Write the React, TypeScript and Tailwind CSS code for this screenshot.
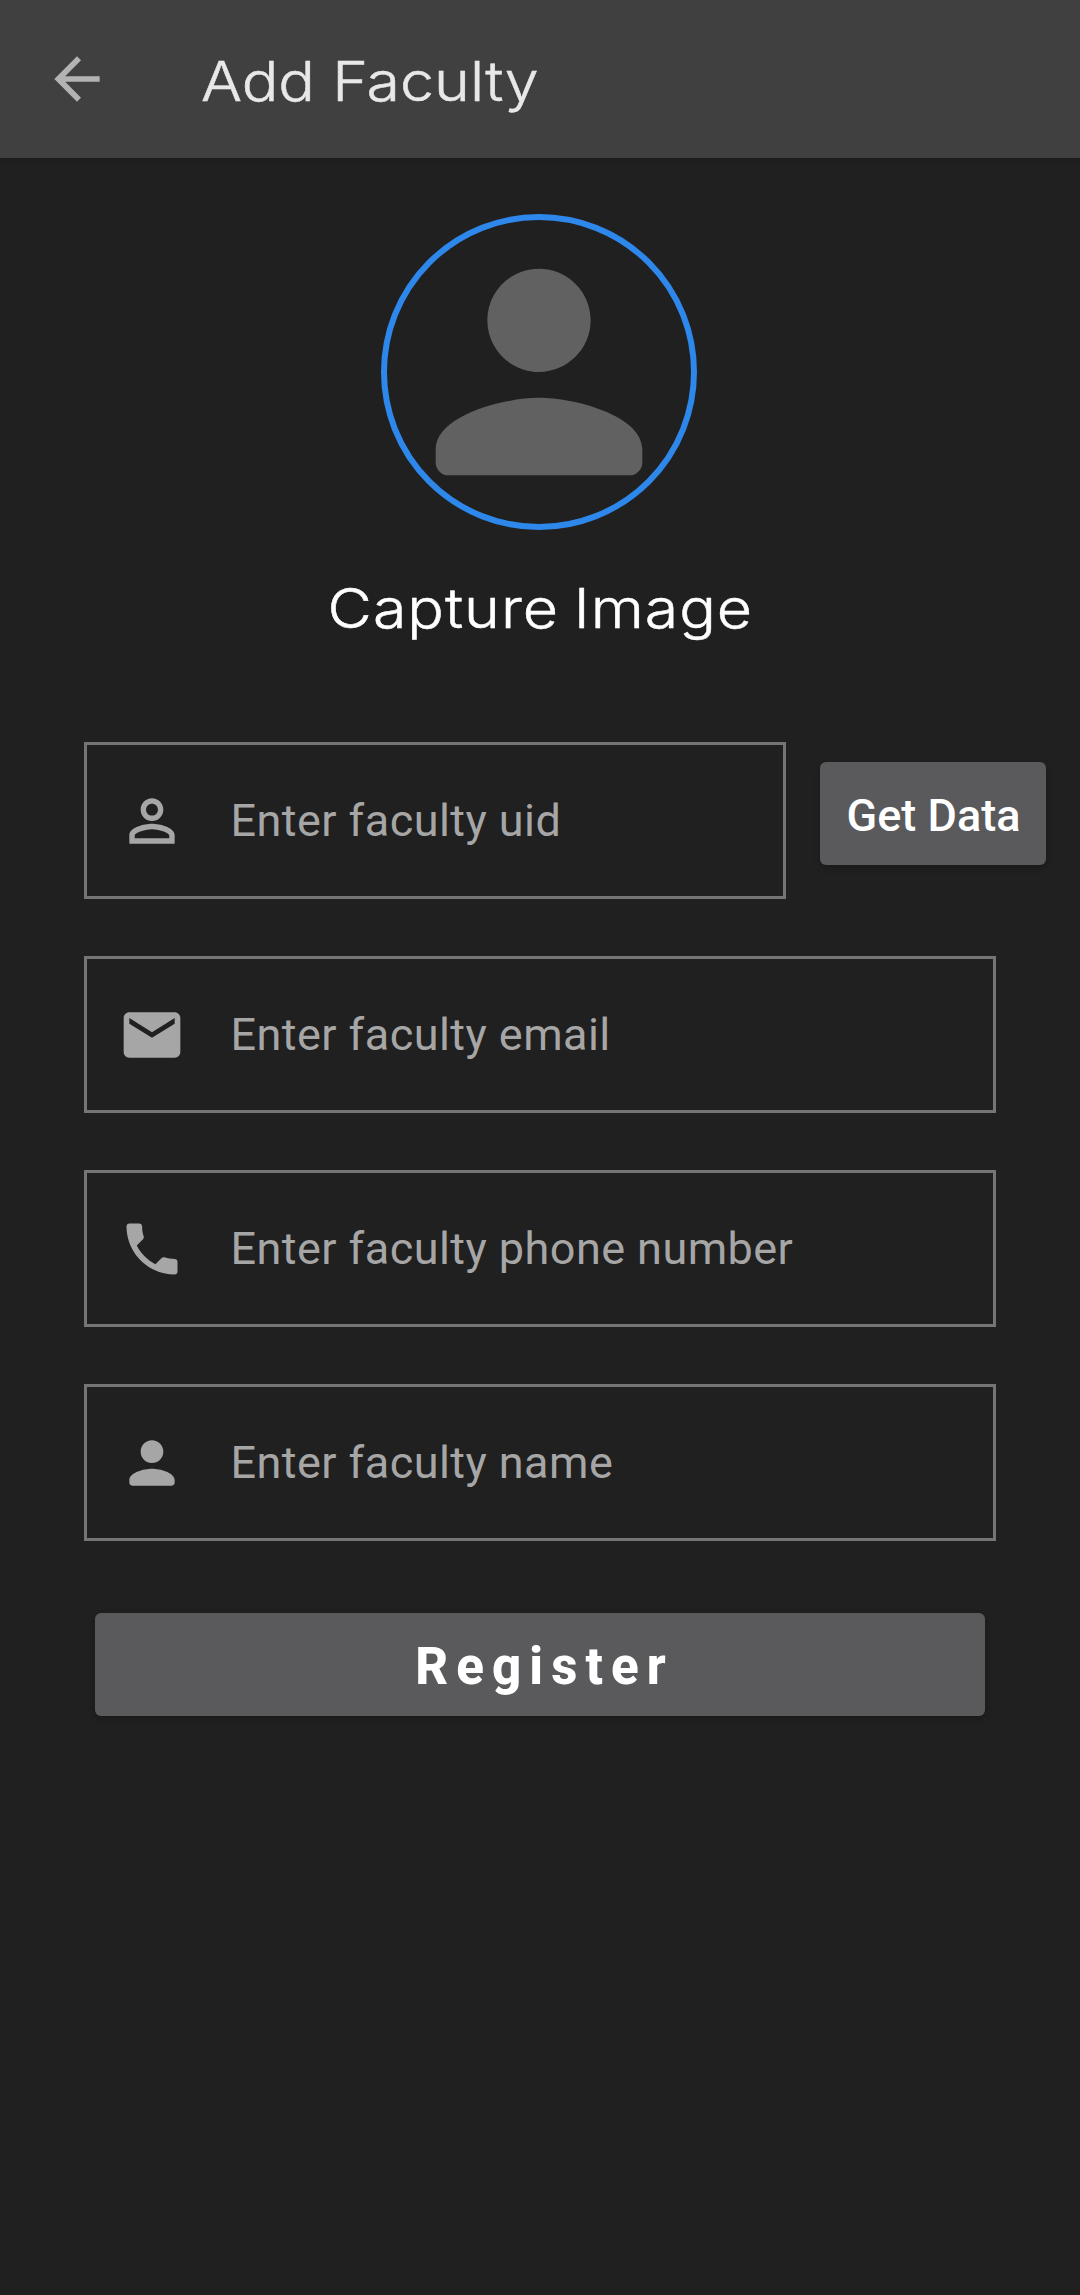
type IconProps = { d: string; className: string };

function Icon({ d, className }: IconProps) {
  return (
    <svg viewBox="0 0 24 24" fill="currentColor" className={`shrink-0 ${className}`} aria-hidden="true">
      <path d={d} />
    </svg>
  );
}

const ARROW = 'M20 11H7.83l5.59-5.59L12 4l-8 8 8 8 1.41-1.41L7.83 13H20v-2z';
const PERSON =
  'M12 12c2.21 0 4-1.79 4-4s-1.79-4-4-4-4 1.79-4 4 1.79 4 4 4zM12 14c-2.67 0-8 1.34-8 4v1c0 .55.45 1 1 1h14c.55 0 1-.45 1-1v-1c0-2.66-5.33-4-8-4z';
const PERSON_OUTLINE =
  'M12 5.9c1.16 0 2.1.94 2.1 2.1s-.94 2.1-2.1 2.1S9.9 9.16 9.9 8s.94-2.1 2.1-2.1m0 9c2.97 0 6.1 1.46 6.1 2.1v1.1H5.9V17c0-.64 3.13-2.1 6.1-2.1M12 4C9.79 4 8 5.79 8 8s1.79 4 4 4 4-1.79 4-4-1.79-4-4-4zm0 9c-2.67 0-8 1.34-8 4v3h16v-3c0-2.66-5.33-4-8-4z';
const EMAIL =
  'M20 4H4c-1.1 0-1.99.9-1.99 2L2 18c0 1.1.9 2 2 2h16c1.1 0 2-.9 2-2V6c0-1.1-.9-2-2-2zm0 4l-8 5-8-5V6l8 5 8-5v2z';
const PHONE =
  'M6.62 10.79c1.44 2.83 3.76 5.14 6.59 6.59l2.2-2.2c.27-.27.67-.36 1.02-.24 1.12.37 2.33.57 3.57.57.55 0 1 .45 1 1V20c0 .55-.45 1-1 1-9.39 0-17-7.61-17-17 0-.55.45-1 1-1h3.5c.55 0 1 .45 1 1 0 1.25.2 2.45.57 3.57.11.35.03.74-.25 1.02l-2.2 2.2z';

function Field({ icon, hint, width }: { icon: string; hint: string; width: string }) {
  return (
    <label
      className={`flex h-[157px] items-center border-3 border-[#757575] pl-[31px] text-[#a6a6a6] ${width}`}
    >
      <Icon d={icon} className="size-[68px]" />
      <span className="ml-[44.5px] text-[45px] leading-none tracking-[0.45px] whitespace-nowrap">{hint}</span>
    </label>
  );
}

export default function App() {
  return (
    <div className="min-h-[2295px] w-[1080px] bg-[#202020] font-['Roboto',sans-serif]">
      <header className="flex h-[158px] items-center bg-[#404040] pl-[43px] shadow-[0_2px_6px_rgba(0,0,0,0.15)]">
        <Icon d={ARROW} className="size-[68px] text-[#b3b3b3]" />
        <h1 className="ml-[90px] origin-left scale-x-[1.107] pt-1 font-['Inter',sans-serif] text-[55px] leading-[66px] font-light whitespace-nowrap text-[#e8e8e8] [-webkit-text-stroke:0.5px_#e8e8e8]">
          Add Faculty
        </h1>
      </header>

      <main>
        <section className="flex w-[1078px] flex-col items-center pt-14">
          <div className="flex size-[316px] items-center justify-center rounded-full border-6 border-[#2e87ea]">
            <Icon d={PERSON} className="size-[310px] text-[#616161]" />
          </div>
          <h2 className="mt-[45px] ml-[3px] scale-x-[1.106] font-['Inter',sans-serif] text-[55px] leading-[66px] font-light tracking-[0.9px] [word-spacing:-3px] whitespace-nowrap text-white [-webkit-text-stroke:0.5px_white]">
            Capture Image
          </h2>
        </section>

        <form className="mt-[101px] flex flex-col gap-[57px] pl-[84px]">
          <div className="flex gap-[34px]">
            <Field icon={PERSON_OUTLINE} hint="Enter faculty uid" width="w-[702px]" />
            <button
              type="button"
              className="mt-5 flex h-[103px] w-[226px] items-center justify-center rounded-[6px] bg-[#5a5a5c] pt-[3px] pl-px text-[45px] leading-none font-medium text-white shadow-[0_3px_6px_rgba(0,0,0,0.22)]"
            >
              Get Data
            </button>
          </div>
          <Field icon={EMAIL} hint="Enter faculty email" width="w-[912px]" />
          <Field icon={PHONE} hint="Enter faculty phone number" width="w-[912px]" />
          <Field icon={PERSON} hint="Enter faculty name" width="w-[912px]" />
          <button
            type="button"
            className="mt-[15px] ml-[11px] flex h-[103px] w-[890px] items-center justify-center rounded-[6px] bg-[#5a5a5c] pt-1 pl-[9px] text-[51px] leading-none font-extrabold tracking-[8.1px] text-white shadow-[0_3px_6px_rgba(0,0,0,0.22)]"
          >
            Register
          </button>
        </form>
      </main>
    </div>
  );
}
